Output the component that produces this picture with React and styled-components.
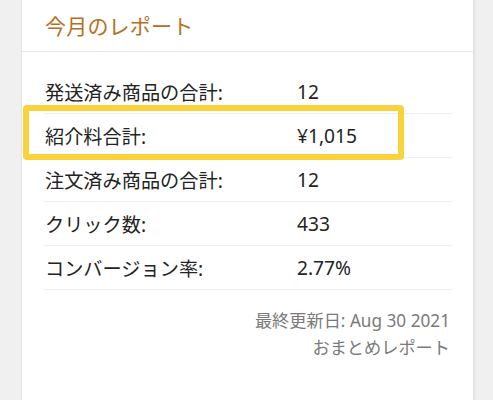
import React from "react";
import styled, { createGlobalStyle } from "styled-components";

const GlobalStyle = createGlobalStyle`
  html, body {
    margin: 0;
    padding: 0;
    background: #f0f0f0;
  }
  body {
    font-family: "Noto Sans", "Noto Sans CJK JP", sans-serif;
  }
`;

const Page = styled.div`
  width: 493px;
  height: 400px;
  overflow: hidden;
  background: #f0f0f0;
`;

const Card = styled.div`
  margin-left: 21px;
  width: 451px;
  height: 400px;
  background: #fff;
  border-left: 1px solid #e6e6e6;
  border-right: 1px solid #e2e2e2;
  box-shadow: 1px 0 3px rgba(0, 0, 0, 0.06);
`;

const Header = styled.div`
  height: 51px;
  display: flex;
  align-items: center;
  padding-left: 23px;
  border-bottom: 1px solid #e8e8e8;
`;

const Title = styled.h2`
  margin: 0;
  margin-top: -2px;
  font-size: 21px;
  font-weight: 400;
  letter-spacing: 0.2px;
  color: #b3711f;
`;

const Rows = styled.div`
  padding: 18px 21px 0 22px;
`;

const Row = styled.div`
  position: relative;
  display: grid;
  grid-template-columns: 253px 1fr;
  align-items: center;
  height: 43px;
  border-bottom: 1px solid #efefef;
  font-size: 19.2px;
  color: #232323;

  ${(p) =>
    p.$highlight &&
    `
    &::after {
      content: "";
      position: absolute;
      left: -21px;
      top: -9px;
      width: 381px;
      height: 55px;
      box-sizing: border-box;
      border: 6.5px solid #f9d23c;
      border-radius: 4px;
      pointer-events: none;
    }
  `}
`;

const Label = styled.span`
  padding-left: 1px;
`;

const Value = styled.span``;

const Footer = styled.div`
  padding: 17px 23px 0 0;
  text-align: right;
  font-size: 17.2px;
  line-height: 27px;
  color: #7a7a7a;
`;

const stats = [
  { label: "発送済み商品の合計:", value: "12" },
  { label: "紹介料合計:", value: "¥1,015", highlight: true },
  { label: "注文済み商品の合計:", value: "12" },
  { label: "クリック数:", value: "433" },
  { label: "コンバージョン率:", value: "2.77%" },
];

export default function App() {
  return (
    <Page>
      <GlobalStyle />
      <Card>
        <Header>
          <Title>今月のレポート</Title>
        </Header>
        <Rows>
          {stats.map((s, i) => (
            <Row key={i} $highlight={s.highlight}>
              <Label>{s.label}</Label>
              <Value>{s.value}</Value>
            </Row>
          ))}
        </Rows>
        <Footer>
          <div>最終更新日: Aug 30 2021</div>
          <div>おまとめレポート</div>
        </Footer>
      </Card>
    </Page>
  );
}
